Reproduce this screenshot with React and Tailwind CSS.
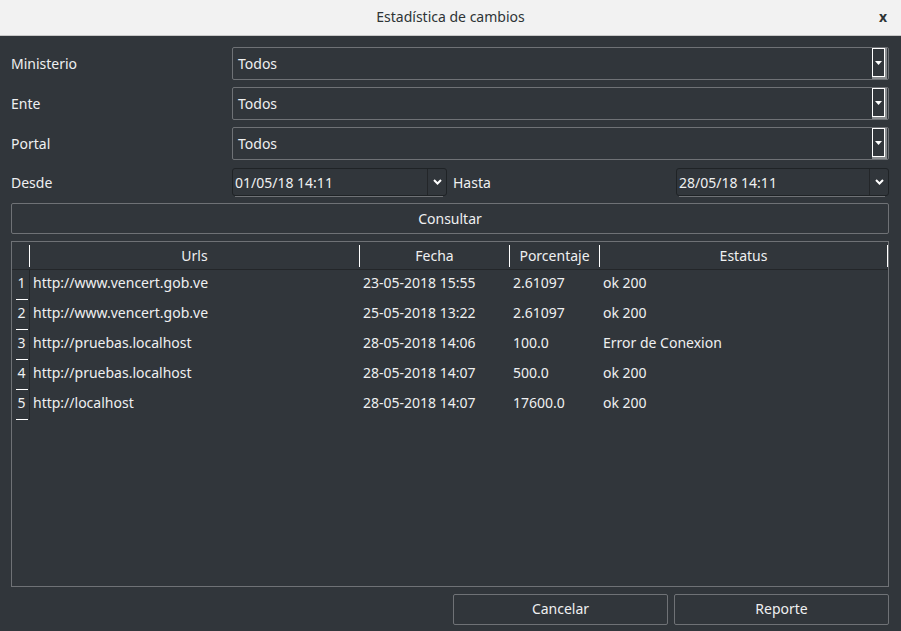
import React from "react";

const rows = [
  ["http://www.vencert.gob.ve", "23-05-2018 15:55", "2.61097", "ok 200"],
  ["http://www.vencert.gob.ve", "25-05-2018 13:22", "2.61097", "ok 200"],
  ["http://pruebas.localhost", "28-05-2018 14:06", "100.0", "Error de Conexion"],
  ["http://pruebas.localhost", "28-05-2018 14:07", "500.0", "ok 200"],
  ["http://localhost", "28-05-2018 14:07", "17600.0", "ok 200"],
];

function Combo({ label }) {
  return (
    <div className="flex h-[33px] items-center">
      <div className="w-[221px]">{label}</div>
      <div className="flex h-[33px] flex-1 items-center rounded-[2px] border border-[#6f7276] pl-[5px]">
        <span className="flex-1">Todos</span>
        <div className="mr-[1px] flex h-[31px] w-[15px] items-center justify-center border-b-2 border-r-2 border-b-[#8a8d90] border-r-[#8a8d90]">
          <div className="flex h-[29px] w-[13px] items-center justify-center border border-white">
            <svg width="7" height="4" viewBox="0 0 7 4">
              <path d="M0 0H7L3.5 4Z" fill="#ffffff" />
            </svg>
          </div>
        </div>
      </div>
    </div>
  );
}

function DateField({ value, w }) {
  return (
    <div className={`relative flex h-[28px] ${w} items-center rounded-[3px] border border-[#1f2326] bg-[#31363b]`}>
      <span className="flex-1 pl-[2px]">{value}</span>
      <div className="flex h-full w-[19px] items-center justify-center border-l border-[#232629]">
        <svg width="9" height="6" viewBox="0 0 9 6">
          <path d="M1 1L4.5 4.5L8 1" stroke="#ffffff" strokeWidth="2" fill="none" />
        </svg>
      </div>
      <div className="absolute bottom-[-2px] left-[2px] right-[3px] h-[1px] bg-[#6f7276]" />
    </div>
  );
}

function HeadCell({ w, children }) {
  return (
    <div className={`flex h-full ${w} items-center`}>
      <div className="flex-1 text-center">{children}</div>
      <div className="h-[22px] w-[1px] bg-white" />
    </div>
  );
}

export default function App() {
  return (
    <div
      className="flex h-[631px] w-[901px] flex-col bg-[#31363b] text-[14px] text-[#eff0f1]"
      style={{ fontFamily: '"Noto Sans", "Open Sans", sans-serif' }}
    >
      <div className="relative flex h-[36px] items-center justify-center border-b border-[#c8c8c8] bg-[#f2f2f2] pb-[2px] text-[#2e3436]">
        <span className="text-[14px]">Estadística de cambios</span>
        <span className="absolute right-[14px] top-[6px] text-[14px] font-bold">x</span>
      </div>
      <div className="flex flex-1 flex-col pl-[11px] pr-[12px] pt-[11px]">
        <div className="flex flex-col gap-[7px]">
          <Combo label="Ministerio" />
          <Combo label="Ente" />
          <Combo label="Portal" />
        </div>
        <div className="mt-[8px] flex h-[28px] items-center">
          <div className="w-[221px]">Desde</div>
          <DateField value="01/05/18 14:11" w="w-[215px]" />
          <div className="flex-1 pl-[6px]">Hasta</div>
          <DateField value="28/05/18 14:11" w="w-[213px]" />
        </div>
        <div className="mt-[7px] flex h-[31px] items-center justify-center rounded-[2px] border border-[#6f7276]">
          Consultar
        </div>
        <div className="mt-[7px] flex h-[346px] flex-col border border-[#6f7276]">
          <div className="flex h-[28px] border-b border-[#232629]">
            <div className="flex h-full w-[18px] items-center justify-end">
              <div className="h-[22px] w-[1px] bg-white" />
            </div>
            <HeadCell w="w-[330px]">Urls</HeadCell>
            <HeadCell w="w-[150px]">Fecha</HeadCell>
            <HeadCell w="w-[90px]">Porcentaje</HeadCell>
            <HeadCell w="flex-1">Estatus</HeadCell>
          </div>
          {rows.map((r, i) => (
            <div key={i} className="flex h-[30px]">
              <div className="flex h-full w-[18px] flex-col items-center border-r border-[#232629]">
                <div className="flex flex-1 items-center pb-[5px] pl-[2px]">{i + 1}</div>
                <div className="ml-[2px] h-[1px] w-[12px] bg-white" />
              </div>
              <div className="flex h-full w-[330px] items-center pb-[6px] pl-[3px]">{r[0]}</div>
              <div className="flex h-full w-[150px] items-center pb-[6px] pl-[3px]">{r[1]}</div>
              <div className="flex h-full w-[90px] items-center pb-[6px] pl-[3px]">{r[2]}</div>
              <div className="flex h-full flex-1 items-center pb-[6px] pl-[3px]">{r[3]}</div>
            </div>
          ))}
        </div>
        <div className="mt-[7px] flex h-[31px] justify-end gap-[6px]">
          <div className="flex w-[215px] items-center justify-center rounded-[2px] border border-[#6f7276] pb-[3px]">
            Cancelar
          </div>
          <div className="flex w-[215px] items-center justify-center rounded-[2px] border border-[#6f7276] pb-[3px]">
            Reporte
          </div>
        </div>
      </div>
    </div>
  );
}
